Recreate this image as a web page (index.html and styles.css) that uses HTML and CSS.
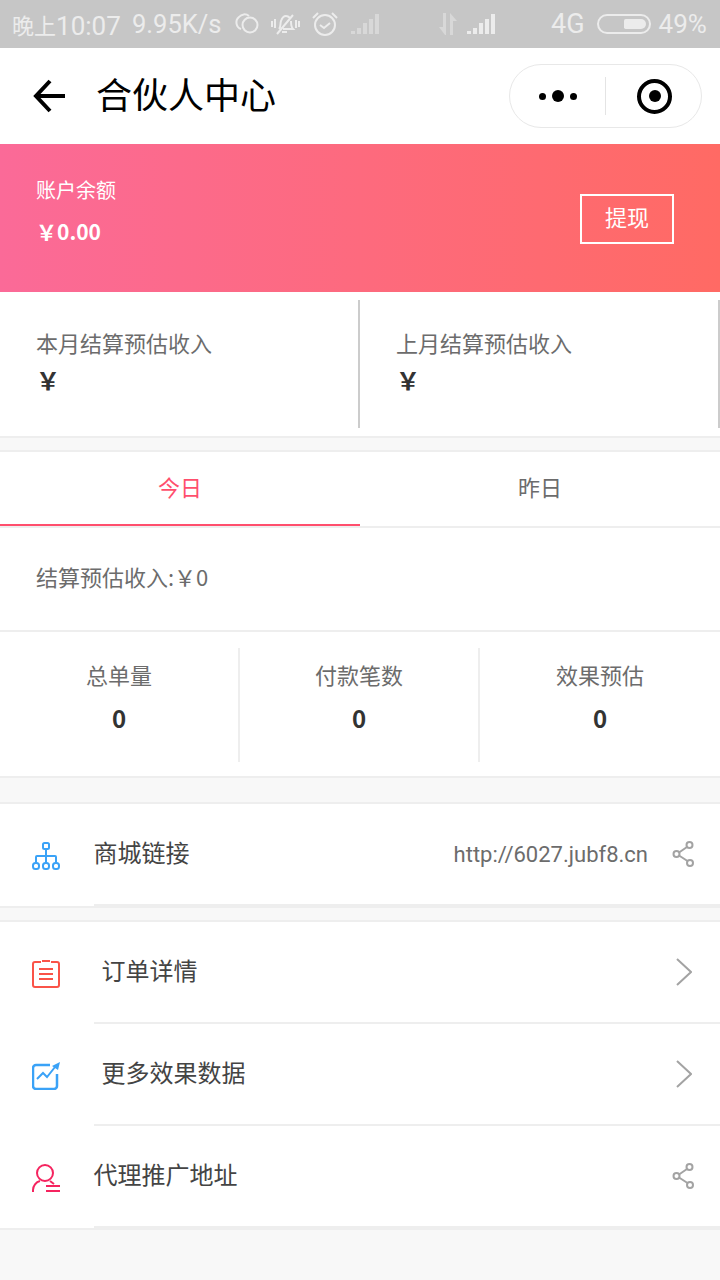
FILE: index.html
```html
<!DOCTYPE html>
<html lang="zh-CN">
  <head>
    <meta charset="UTF-8" />
    <meta name="viewport" content="width=device-width, initial-scale=1.0" />
    <title>合伙人中心</title>
    <link rel="stylesheet" href="styles.css">
  </head>
  <body>
    <div class="status-bar">
      <span class="status-time"><span class="status-cn">晚上</span>10:07</span>
      <span class="status-speed">9.95K/s</span>
      <svg class="icon-links" width="26" height="26" viewBox="0 0 26 26" fill="none" stroke="#ececec" stroke-width="2">
        <path d="M7 18a7 7 0 0 1-2-12a7 7 0 0 1 10-1" />
        <circle cx="16" cy="14" r="7.500" />
      </svg>
      <svg class="icon-mute" width="30" height="26" viewBox="0 0 30 26" fill="none" stroke="#ececec" stroke-width="2">
        <path d="M9 18c2-2 1-5 2-8s3-5 5-5 3 1 4 2M21 10c0 3 0 6 2 8H13" />
        <path d="M7 23 23 4M12 21h5M2 10v6M5 8v9M26 9v8M29 10v6" />
      </svg>
      <svg class="icon-alarm" width="26" height="28" viewBox="0 0 26 28" fill="none" stroke="#ececec" stroke-width="2">
        <circle cx="13" cy="15" r="10" />
        <path d="M8 15l4 3 6-5M1 8l5-5M25 8l-5-5" />
      </svg>
      <div class="signal signal-dim">
        <i class="bar bar-1"></i><i class="bar bar-2"></i><i class="bar bar-3"></i><i class="bar bar-4"></i><i class="bar bar-5"></i>
      </div>
      <svg class="icon-arrows" width="20" height="22" viewBox="0 0 20 22" fill="#d8d8d8">
        <path d="M7 22 1 14h4V0h3v22zM12 0l7 8h-4v14h-3z" />
      </svg>
      <div class="signal signal-on">
        <i class="bar bar-1"></i><i class="bar bar-2"></i><i class="bar bar-3"></i><i class="bar bar-4"></i><i class="bar bar-5"></i>
      </div>
      <span class="status-net">4G</span>
      <div class="battery"><div class="battery-fill"></div></div>
      <span class="status-pct">49%</span>
    </div>

    <header class="nav">
      <svg class="nav-back" width="36" height="34" viewBox="0 0 36 34" fill="none" stroke="#000" stroke-width="4">
        <path d="M35 17H7M20 2 6 17l14 15" />
      </svg>
      <h1>合伙人中心</h1>
      <div class="capsule">
        <div class="capsule-dots"><i></i><i class="big"></i><i></i></div>
        <div class="capsule-line"></div>
        <div class="capsule-target"><i></i></div>
      </div>
    </header>

    <section class="balance">
      <div class="balance-info">
        <p class="balance-label">账户余额</p>
        <p class="balance-num">￥0.00</p>
      </div>
      <button class="withdraw">提现</button>
    </section>

    <section class="income card">
      <div class="income-item">
        <p class="income-label">本月结算预估收入</p>
        <p class="income-num">￥</p>
      </div>
      <div class="income-item">
        <p class="income-label">上月结算预估收入</p>
        <p class="income-num">￥</p>
      </div>
    </section>

    <section class="card stats-card">
      <div class="tabs">
        <div class="tab active">今日</div>
        <div class="tab">昨日</div>
      </div>
      <div class="settle">结算预估收入:￥0</div>
      <div class="stats">
        <div class="stat"><p class="stat-label">总单量</p><p class="stat-num">0</p></div>
        <div class="stat"><p class="stat-label">付款笔数</p><p class="stat-num">0</p></div>
        <div class="stat"><p class="stat-label">效果预估</p><p class="stat-num">0</p></div>
      </div>
    </section>

    <section class="card list first-list">
      <div class="row">
        <svg class="row-icon" width="28" height="28" viewBox="0 0 28 28" fill="none" stroke="#3aa2f7" stroke-width="2">
          <rect x="11" y="1" width="6" height="6" rx="1.500" />
          <path d="M14 7v14M4 20v-5a1 1 0 0 1 1-1h18a1 1 0 0 1 1 1v5" />
          <rect x="1" y="21" width="6" height="6" rx="2.500" />
          <rect x="11" y="21" width="6" height="6" rx="2.500" />
          <rect x="21" y="21" width="6" height="6" rx="2.500" />
        </svg>
        <div class="row-main">
          <span class="row-title">商城链接</span>
          <span class="row-value">http://6027.jubf8.cn</span>
          <svg class="row-share" width="24" height="26" viewBox="0 0 24 26" fill="none" stroke="#a3a3a3" stroke-width="2">
            <circle cx="17.500" cy="4" r="3" />
            <circle cx="4.500" cy="13" r="3" />
            <circle cx="18" cy="22" r="3" />
            <path d="M7 11.500l8-5.500M7 14.500l8.500 5.500" />
          </svg>
        </div>
      </div>
    </section>

    <section class="card list">
      <div class="row">
        <svg class="row-icon" width="28" height="28" viewBox="0 0 28 28" fill="none" stroke="#fa5348" stroke-width="2">
          <path d="M9 2H3a2 2 0 0 0-2 2v21a2 2 0 0 0 2 2h22a2 2 0 0 0 2-2V4a2 2 0 0 0-2-2h-6" />
          <path d="M10 1h8M7 9h14M7 14h14M7 19h14" />
        </svg>
        <div class="row-main row-inset">
          <span class="row-title">订单详情</span>
          <svg class="row-arrow" width="16" height="28" viewBox="0 0 16 28" fill="none" stroke="#a3a3a3" stroke-width="2">
            <path d="M1 1l14 13L1 27" />
          </svg>
        </div>
      </div>
      <div class="row">
        <svg class="row-icon" width="28" height="28" viewBox="0 0 28 28" fill="none" stroke="#3aa2f7" stroke-width="2.500">
          <path d="M18 3H4a3 3 0 0 0-3 3v18a3 3 0 0 0 3 3h18a3 3 0 0 0 3-3V12" />
          <path d="M5 17l6-6 4 4 8-10" stroke-width="2" />
          <path d="M20 4l8-4-2 8z" fill="#3aa2f7" stroke="none" />
        </svg>
        <div class="row-main row-inset">
          <span class="row-title">更多效果数据</span>
          <svg class="row-arrow" width="16" height="28" viewBox="0 0 16 28" fill="none" stroke="#a3a3a3" stroke-width="2">
            <path d="M1 1l14 13L1 27" />
          </svg>
        </div>
      </div>
      <div class="row">
        <svg class="row-icon" width="28" height="28" viewBox="0 0 28 28" fill="none" stroke="#f5245f" stroke-width="2">
          <ellipse cx="13" cy="9" rx="8" ry="8" />
          <path d="M1 28v-2c0-4 3-8 7-9M18 17l4 3M14 22h14M14 27h14" />
        </svg>
        <div class="row-main">
          <span class="row-title">代理推广地址</span>
          <svg class="row-share" width="24" height="26" viewBox="0 0 24 26" fill="none" stroke="#a3a3a3" stroke-width="2">
            <circle cx="17.500" cy="4" r="3" />
            <circle cx="4.500" cy="13" r="3" />
            <circle cx="18" cy="22" r="3" />
            <path d="M7 11.500l8-5.500M7 14.500l8.500 5.500" />
          </svg>
        </div>
      </div>
    </section>
  </body>
</html>
```

FILE: styles.css
```css
* {
  box-sizing: border-box;
}
html,
body {
  margin: 0;
  padding: 0;
}
body {
  width: 720px;
  height: 1280px;
  overflow: hidden;
  background-color: #f8f8f8;
  font-family: "Noto Sans CJK SC", "Roboto", sans-serif;
  color: #333;
}
p,
h1 {
  margin: 0;
  font-weight: normal;
}

/* status bar */
.status-bar {
  height: 48px;
  padding: 0 0 0 12px;
  display: flex;
  align-items: center;
  background-color: #c6c6c6;
  color: #ececec;
  font-family: "Roboto", "Noto Sans CJK SC", sans-serif;
  font-size: 26px;
  white-space: nowrap;
}
.status-time {
  width: 109px;
}
.status-cn {
  font-size: 22px;
  vertical-align: 1px;
}
.status-speed {
  margin-left: 11px;
  width: 90px;
  font-size: 25.5px;
}
.icon-links {
  margin-left: 12px;
}
.icon-mute {
  margin-left: 10px;
}
.icon-alarm {
  margin-left: 12px;
}
.signal {
  display: flex;
  align-items: flex-end;
  gap: 2px;
  height: 20px;
}
.signal-dim {
  margin-left: 13px;
}
.signal-dim .bar {
  background-color: #d8d8d8;
}
.bar {
  width: 4px;
  background-color: #ececec;
}
.bar-1 {
  height: 3px;
}
.bar-2 {
  height: 6px;
}
.bar-3 {
  height: 11px;
}
.bar-4 {
  height: 15px;
}
.bar-5 {
  height: 20px;
}
.icon-arrows {
  margin-left: 59px;
}
.signal-on {
  margin-left: 9px;
}
.status-net {
  margin-left: 56px;
  font-size: 27px;
}
.battery {
  width: 54px;
  height: 20px;
  margin-left: 12px;
  padding: 3px;
  display: flex;
  justify-content: flex-end;
  border: 2px solid #ececec;
  border-radius: 10px;
}
.battery-fill {
  width: 22px;
  background-color: #ececec;
  border-radius: 2px 6px 6px 2px;
}
.status-pct {
  margin-left: 8px;
}

/* nav */
.nav {
  height: 96px;
  display: flex;
  align-items: center;
  background-color: #fff;
  padding-left: 30px;
}
.nav h1 {
  margin-left: 30px;
  margin-bottom: 6px;
  font-size: 36px;
  color: #000;
}
.capsule {
  margin-left: auto;
  margin-right: 18px;
  width: 193px;
  height: 64px;
  display: flex;
  align-items: center;
  border: 1px solid #e8e8e8;
  border-radius: 32px;
}
.capsule-dots {
  width: 95px;
  display: flex;
  align-items: center;
  justify-content: center;
  gap: 6px;
}
.capsule-dots i {
  width: 7px;
  height: 7px;
  border-radius: 50%;
  background-color: #000;
}
.capsule-dots i.big {
  width: 12px;
  height: 12px;
}
.capsule-line {
  width: 1px;
  height: 38px;
  background-color: #e4e4e4;
}
.capsule-target {
  width: 35px;
  height: 35px;
  margin-left: 31px;
  display: flex;
  align-items: center;
  justify-content: center;
  border: 4px solid #000;
  border-radius: 50%;
}
.capsule-target i {
  width: 12px;
  height: 12px;
  border-radius: 50%;
  background-color: #000;
}

/* balance */
.balance {
  height: 148px;
  padding: 0 46px 0 36px;
  display: flex;
  align-items: center;
  justify-content: space-between;
  background: linear-gradient(90deg, #fb6a98, #ff6a64);
  color: #fff;
}
.balance-info {
  margin-bottom: 15px;
}
.balance-label {
  font-size: 20px;
  line-height: 30px;
}
.balance-num {
  margin-top: 11px;
  font-size: 21px;
  line-height: 30px;
  font-weight: bold;
}
.withdraw {
  width: 94px;
  height: 50px;
  margin-top: 2px;
  padding: 0 0 7px;
  border: 2px solid #fff;
  background: none;
  color: #fff;
  font-family: inherit;
  font-size: 22px;
}

.card {
  background-color: #fff;
  border-bottom: 2px solid #eee;
}

/* income */
.income {
  height: 146px;
  padding: 8px 0;
  display: flex;
}
.income-item {
  width: 360px;
  height: 128px;
  padding: 26px 0 0 36px;
  border-right: 2px solid #ccc;
}
.income-label {
  font-size: 22px;
  line-height: 32px;
  color: #6c6c6c;
}
.income-num {
  margin-top: 5px;
  font-size: 24px;
  line-height: 34px;
  font-weight: bold;
}

/* tabs and stats */
.stats-card {
  margin-top: 12px;
  border-top: 2px solid #eee;
}
.tabs {
  display: flex;
  height: 76px;
  border-bottom: 2px solid #eee;
}
.tab {
  width: 360px;
  height: 74px;
  line-height: 68px;
  text-align: center;
  font-size: 22px;
  color: #6c6c6c;
}
.tab.active {
  color: #ff4f6d;
  border-bottom: 2px solid #ff4f6d;
}
.settle {
  height: 104px;
  padding-left: 36px;
  line-height: 96px;
  font-size: 22px;
  color: #6c6c6c;
  border-bottom: 2px solid #eee;
}
.stats {
  height: 144px;
  padding: 16px 0;
  display: flex;
}
.stat {
  width: 240px;
  height: 114px;
  padding-top: 10px;
  text-align: center;
  border-right: 2px solid #eee;
}
.stat:last-child {
  border-right: none;
}
.stat-label {
  font-size: 22px;
  line-height: 32px;
  color: #6c6c6c;
}
.stat-num {
  margin-top: 12px;
  font-size: 24px;
  line-height: 32px;
  font-weight: bold;
}

/* lists */
.list {
  margin-top: 12px;
  border-top: 2px solid #eee;
}
.first-list {
  margin-top: 24px;
}
.row {
  height: 102px;
  display: flex;
  align-items: center;
  padding-left: 32px;
}
.row-icon {
  flex: none;
  margin-top: 2px;
}
.row-main {
  flex: 1;
  height: 102px;
  margin-left: 34px;
  padding-right: 24px;
  display: flex;
  align-items: center;
  border-bottom: 2px solid #eee;
}
.row-inset {
  padding-left: 8px;
}
.row-title {
  margin-bottom: 6px;
  margin-left: -0.5px;
  font-size: 24px;
  color: #444;
}
.row-value {
  margin-left: auto;
  font-family: "Roboto", sans-serif;
  font-size: 22px;
  color: #6c6c6c;
}
.row-share {
  margin-left: 24px;
}
.row-title + .row-share {
  margin-left: auto;
}
.row-arrow {
  margin-left: auto;
  margin-right: 4px;
}
```
